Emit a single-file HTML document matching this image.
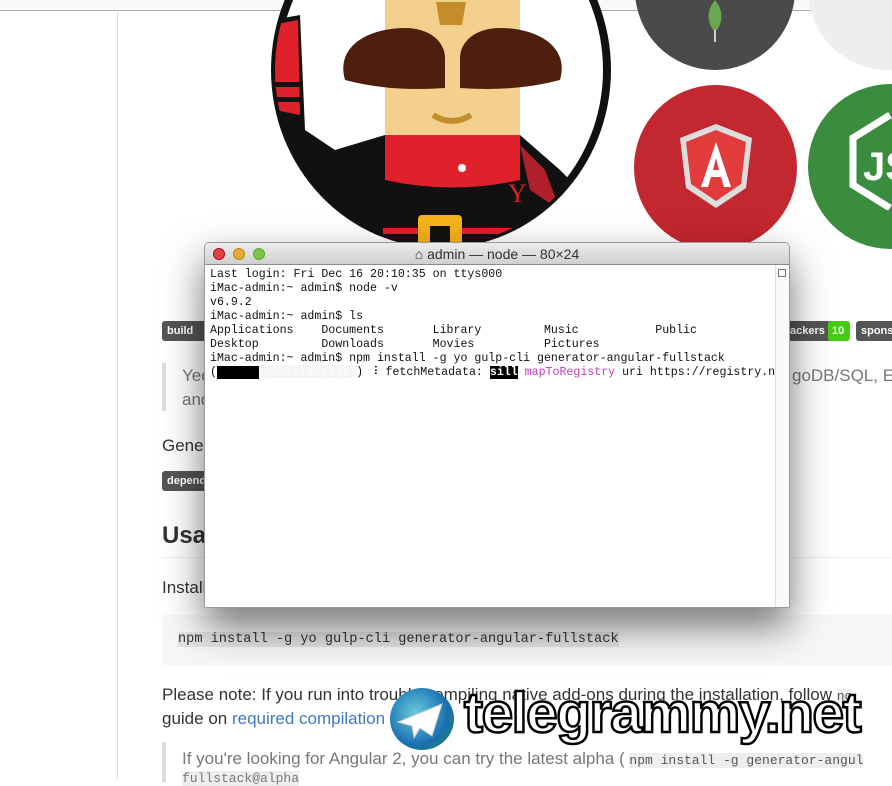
<!DOCTYPE html>
<html><head><style>
*{margin:0;padding:0;box-sizing:border-box}
body{width:892px;height:779px;overflow:hidden;background:#fff;position:relative;font-family:"Liberation Sans",sans-serif;color:#333}
.a{position:absolute}
.t{position:absolute;font-size:17px;white-space:nowrap;color:#333}
.badge{position:absolute;height:20px;border-radius:3px;font-size:11px;color:#fff;line-height:20px;padding:0 5px;font-weight:bold}
.mono{font-family:"Liberation Mono",monospace}
.term{position:absolute;left:204px;top:242px;width:586px;height:366px;background:#fff;border:1px solid #9a9a9a;border-radius:5px 5px 2px 2px;box-shadow:0 18px 40px rgba(0,0,0,.55);overflow:hidden}
.tb{height:22px;background:linear-gradient(#ececec,#d0d0d0);border-bottom:1px solid #8a8a8a;position:relative;font-size:14px;text-align:center;line-height:22px;color:#333}
.dot{position:absolute;top:5px;width:12px;height:12px;border-radius:50%}
pre{font-family:"Liberation Mono",monospace;font-size:11.6px;line-height:14px;color:#111;position:absolute;left:5px;top:25px}
</style></head><body>
<div class="a" style="left:0;top:0;width:892px;height:11px;border-bottom:1px solid #aaa;background:#fafafa"></div>
<div class="a" style="left:117px;top:12px;width:1px;height:767px;background:#ddd"></div>

<!-- yeoman -->
<svg class="a" style="left:0;top:0" width="892" height="260">
<defs><clipPath id="c"><ellipse cx="441" cy="70" rx="166" ry="175"/></clipPath></defs>
<ellipse cx="441" cy="70" rx="170" ry="178" fill="#111"/>
<ellipse cx="441" cy="70" rx="162" ry="171" fill="#fff"/>
<g clip-path="url(#c)">
<path d="M272 20 L300 15 L305 130 L335 150 L385 135 L520 135 L560 170 L600 210 L620 260 L260 260Z" fill="#111"/>
<path d="M272 25 L298 20 L300 115 L275 110Z" fill="#e0202a"/>
<rect x="272" y="82" width="30" height="5" fill="#111"/><rect x="272" y="97" width="30" height="5" fill="#111"/>
<rect x="385" y="0" width="135" height="140" fill="#f4d08f"/>
<path d="M385 135 L520 135 L520 180 Q452 195 385 180Z" fill="#e0202a"/>
<circle cx="462" cy="168" r="4" fill="#fff"/>
<path d="M520 145 L545 170 L560 210 L530 190Z" fill="#b0202a"/>
<path d="M345 80 C335 45 370 28 405 28 C430 28 445 42 445 58 L445 88 Q390 92 345 80Z" fill="#4e1f0f"/>
<path d="M560 80 C570 45 535 28 500 28 C475 28 460 42 460 58 L460 88 Q515 92 560 80Z" fill="#4e1f0f"/>
<path d="M436 2 L466 2 L462 25 L440 25Z" fill="#c48d2a"/>
<path d="M433 115 Q452 127 471 115" stroke="#c48d2a" stroke-width="6" fill="none"/>
<rect x="383" y="228" width="150" height="6" fill="#e0202a"/>
<text x="508" y="202" fill="#d3232b" font-size="26" font-family="Liberation Serif">Y</text>
<rect x="418" y="215" width="44" height="40" rx="4" fill="#f6b21a"/>
<rect x="430" y="226" width="20" height="30" fill="#111"/>
</g>
</svg>
<div class="a" style="left:635px;top:-90px;width:160px;height:160px;border-radius:50%;background:#4a4a4a"></div>
<svg class="a" style="left:700px;top:0" width="30" height="45"><path d="M15 0 C25 12 22 25 15 32 C8 25 5 12 15 0Z" fill="#6aa84f"/><rect x="14" y="30" width="2" height="12" fill="#ccc"/></svg>
<div class="a" style="left:808px;top:-90px;width:160px;height:160px;border-radius:50%;background:#eee"></div>
<div class="a" style="left:634px;top:85px;width:163px;height:165px;border-radius:50%;background:#c3272f"></div>
<svg class="a" style="left:676px;top:122px" width="80" height="90"><path d="M40 2 L76 16 L70 66 L40 86 L10 66 L4 16Z" fill="#ddd"/><path d="M40 8 L70 20 L65 62 L40 79 L15 62 L10 20Z" fill="#e13b3b"/><path d="M40 20 L25 65 L32 65 L35 55 L45 55 L48 65 L55 65Z M37 48 L40 36 L43 48Z" fill="#fff"/></svg>
<div class="a" style="left:808px;top:84px;width:165px;height:165px;border-radius:50%;background:#3a8d3e"></div>
<svg class="a" style="left:845px;top:110px" width="47" height="100"><path d="M45 5 L8 28 L8 75 L45 98" stroke="#fff" stroke-width="7" fill="none"/><text x="18" y="70" fill="#fff" font-size="40" font-weight="bold">JS</text></svg>

<!-- badges -->
<div class="badge" style="left:162px;top:321px;background:#555;width:50px">build</div>
<div class="badge" style="left:770px;top:321px;background:#555;width:60px;border-radius:0;padding-left:20px">ackers</div>
<div class="badge" style="left:828px;top:321px;background:#4c1;width:22px;padding:0 4px">10</div>
<div class="badge" style="left:856px;top:321px;background:#555;width:40px">spons</div>
<div class="badge" style="left:162px;top:471px;background:#555;width:60px">depend</div>

<div class="a" style="left:162px;top:363px;width:4px;height:48px;background:#ddd"></div>
<div class="t" style="left:182px;top:366px;color:#777">Yeoman</div>
<div class="t" style="left:182px;top:390px;color:#777">and</div>
<div class="t" style="left:792px;top:366px;color:#777">goDB/SQL, Ex</div>
<div class="t" style="left:162px;top:436px">Generator</div>
<div class="t" style="left:162px;top:522px;font-size:24px;font-weight:bold">Usage</div>
<div class="a" style="left:162px;top:557px;width:730px;height:1px;background:#eee"></div>
<div class="t" style="left:162px;top:578px">Install</div>
<div class="a" style="left:162px;top:615px;width:730px;height:50px;background:#f7f7f7"></div>
<div class="t mono" style="left:178px;top:632px;font-size:13.6px;background:#e4e4e4">npm install -g yo gulp-cli generator-angular-fullstack</div>
<div class="t" style="left:162px;top:685px">Please note: If you run into trouble compiling native add-ons during the installation, follow <span class="mono" style="font-size:13px;background:#eee;color:#555">nc</span></div>
<div class="t" style="left:162px;top:709px">guide on <span style="color:#4078c0">required compilation</span></div>
<div class="a" style="left:162px;top:742px;width:4px;height:40px;background:#ddd"></div>
<div class="t" style="left:182px;top:749px;color:#777">If you're looking for Angular 2, you can try the latest alpha ( <span class="mono" style="font-size:13px;background:#eee;color:#555">npm install -g generator-angul</span></div>
<div class="t mono" style="left:182px;top:771px;font-size:13px;color:#777;background:#eee">fullstack@alpha</div>

<!-- terminal -->
<div class="term">
<div class="tb">
<div class="dot" style="left:8px;background:#e0443e;border:1px solid #b03"></div>
<div class="dot" style="left:28px;background:#e8a93a;border:1px solid #b80"></div>
<div class="dot" style="left:48px;background:#7fc54a;border:1px solid #5a3"></div>
⌂ admin — node — 80×24
</div>
<div class="a" style="right:0;top:22px;width:14px;height:344px;border-left:1px solid #ddd;background:#fafafa"></div>
<div class="a" style="right:3px;top:26px;width:8px;height:8px;border:1px solid #777"></div>
<pre>Last login: Fri Dec 16 20:10:35 on ttys000
iMac-admin:~ admin$ node -v
v6.9.2
iMac-admin:~ admin$ ls
Applications    Documents       Library         Music           Public
Desktop         Downloads       Movies          Pictures
iMac-admin:~ admin$ npm install -g yo gulp-cli generator-angular-fullstack
(<span style="background:#000">      </span><span style="color:#bbb">░░░░░░░░░░░░░░</span>) ⠸ fetchMetadata: <span style="background:#000;color:#fff;font-weight:bold">sill</span> <span style="color:#c03cc0">mapToRegistry</span> uri https://registry.n</pre>
</div>

<!-- watermark -->
<div class="a" style="left:390px;top:688px;width:64px;height:62px;border-radius:50%;background:radial-gradient(circle at 40% 40%,#6cd,#1a6fb0 60%,#2a8a3a)"></div>
<svg class="a" style="left:396px;top:700px" width="50" height="40"><path d="M2 22 L46 4 L36 36 L24 28 L18 38 L16 26Z" fill="#fff" stroke="#ccc"/></svg>
<div class="t" style="left:464px;top:680px;font-size:57px;color:#fff;-webkit-text-stroke:2.5px #000;font-weight:bold;letter-spacing:-1.5px">telegrammy.net</div>
</body></html>
